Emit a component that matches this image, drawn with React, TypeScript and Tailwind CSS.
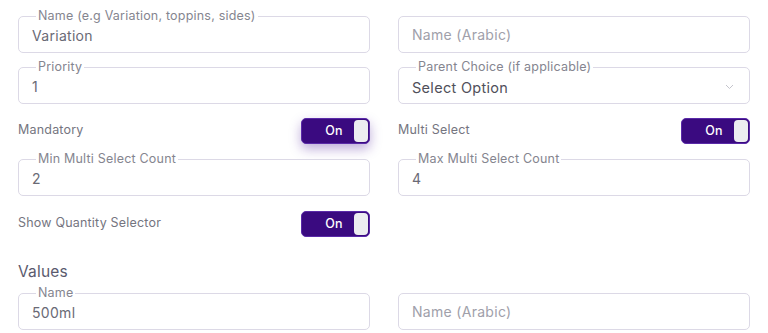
import React from "react";

function Field({ label, value, placeholder, select }: { label?: string; value?: string; placeholder?: string; select?: boolean }) {
  return (
    <div className="relative h-[37px] rounded-[5px] border border-[#dcd9e6] bg-white flex items-center pl-[13px] pr-[14px]">
      {label && (
        <span className="absolute left-[17px] top-[-8px] bg-white px-[2px] text-[12.5px] leading-[14px] tracking-[0.2px] text-[#85858f]">
          {label}
        </span>
      )}
      {value !== undefined ? (
        <span
          className={`flex-1 tracking-[0.3px] ${
            select ? "text-[14.5px] text-[#50505a] pt-[4px]" : "text-[14px] text-[#6a6a75] pt-[2px]"
          }`}
        >
          {value}
        </span>
      ) : (
        <span className="flex-1 text-[14px] tracking-[0.3px] text-[#a0a0aa]">{placeholder}</span>
      )}
      {select && (
        <svg width="9" height="6" viewBox="0 0 9 6" className="mt-[2px] mr-[1px]">
          <path d="M1 1l3.5 3.5L8 1" fill="none" stroke="#c4c4cc" strokeWidth="1" />
        </svg>
      )}
    </div>
  );
}

function Toggle({ shadow }: { shadow?: boolean }) {
  return (
    <div
      className={`flex h-[26px] w-[69px] items-center rounded-[5px] border border-[#5a2aa8] bg-[#3a0a80] pl-[12px] pr-[1px] ${
        shadow ? "shadow-[0_5px_12px_rgba(70,20,150,0.35)]" : ""
      }`}
    >
      <span className="flex-1 text-center text-[12.5px] font-medium tracking-[0.3px] text-white">On</span>
      <span className="h-[22px] w-[14px] rounded-[4px] bg-[#ececf0]" />
    </div>
  );
}

function ToggleRow({ label, shadow }: { label: string; shadow?: boolean }) {
  return (
    <div className="flex items-start justify-between">
      <span className="mt-[3px] text-[12.5px] tracking-[0.2px] text-[#75757f]">{label}</span>
      <Toggle shadow={shadow} />
    </div>
  );
}

export default function App() {
  return (
    <div
      className="h-[333px] w-[768px] overflow-hidden bg-white px-[18px] pt-[16px]"
      style={{ fontFamily: "Inter, 'Open Sans', sans-serif" }}
    >
      <div className="grid grid-cols-2 gap-x-[28px]">
        <Field label="Name (e.g Variation, toppins, sides)" value="Variation" />
        <Field placeholder="Name (Arabic)" />
      </div>
      <div className="mt-[14px] grid grid-cols-2 gap-x-[28px]">
        <Field label="Priority" value="1" />
        <Field label="Parent Choice (if applicable)" value="Select Option" select />
      </div>
      <div className="mt-[14px] grid grid-cols-2 gap-x-[28px]">
        <ToggleRow label="Mandatory" shadow />
        <ToggleRow label="Multi Select" />
      </div>
      <div className="mt-[15px] grid grid-cols-2 gap-x-[28px]">
        <Field label="Min Multi Select Count" value="2" />
        <Field label="Max Multi Select Count" value="4" />
      </div>
      <div className="mt-[15px] grid grid-cols-2 gap-x-[28px]">
        <ToggleRow label="Show Quantity Selector" />
        <div />
      </div>
      <div className="mt-[25px] text-[15.5px] leading-[20px] tracking-[0.2px] text-[#5a5a6e]">Values</div>
      <div className="mt-[11px] grid grid-cols-2 gap-x-[28px]">
        <Field label="Name" value="500ml" />
        <Field placeholder="Name (Arabic)" />
      </div>
      <div className="mt-[14px] grid grid-cols-2 gap-x-[28px]">
        <Field label="Price" value="" />
        <Field label="Price" value="" />
      </div>
    </div>
  );
}
